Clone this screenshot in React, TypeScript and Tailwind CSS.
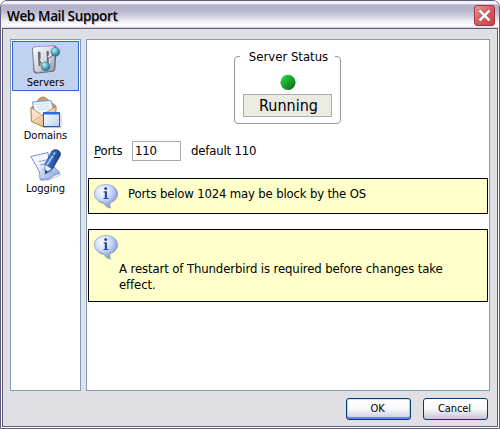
import React from "react";

function ServersIcon() {
  return (
    <svg width="32" height="32" viewBox="0 0 32 32">
      <defs>
        <linearGradient id="metal" x1="0" y1="0" x2="1" y2="1">
          <stop offset="0" stopColor="#ffffff" />
          <stop offset="0.55" stopColor="#d3d4da" />
          <stop offset="1" stopColor="#9294a6" />
        </linearGradient>
        <linearGradient id="slot" x1="0" y1="0" x2="1" y2="0">
          <stop offset="0" stopColor="#3a3d49" />
          <stop offset="1" stopColor="#9a9dac" />
        </linearGradient>
        <radialGradient id="knob" cx="0.35" cy="0.3" r="0.75">
          <stop offset="0" stopColor="#c5eef5" />
          <stop offset="0.5" stopColor="#57b3cd" />
          <stop offset="1" stopColor="#1c6589" />
        </radialGradient>
      </defs>
      <path d="M5 1.500 L24 .5 Q27.500 .5 27.300 4 L26 25 Q25.800 28 23 28.500 L7 30.500 Q3 31 2.500 27 L1.200 5 Q1.200 1.700 5 1.500Z" fill="#62636f" />
      <path d="M5 2 L22.500 1 Q25.800 1 25.500 4 L24.300 25 Q24 27 22 27.300 L7 29 Q4 29.300 3.700 26.500 L2 5 Q2 2.200 5 2Z" fill="url(#metal)" stroke="#b5b6c2" strokeWidth="0.7" />
      <path d="M7 7.500 Q9 5.500 11 7.500 V22 Q9.500 24.500 7.500 22Z" fill="url(#slot)" stroke="#ffffff" strokeWidth="0.8" />
      <path d="M16 6.500 Q18 5 20 6.500 L19.700 20 Q18 22 16.500 20Z" fill="url(#slot)" stroke="#ffffff" strokeWidth="0.8" />
      <path d="M10 16.500 L15 22" stroke="#6b6e7a" strokeWidth="2.600" />
      <path d="M10 15.500 L15 21 M18 13 L24.500 8.500" stroke="#edeef2" strokeWidth="1.800" />
      <path d="M18 14.500 L24.500 10" stroke="#555867" strokeWidth="1" />
      <circle cx="15.500" cy="22.800" r="4.700" fill="url(#knob)" stroke="#276f8f" strokeWidth="0.6" />
      <circle cx="26" cy="7.300" r="4.700" fill="url(#knob)" stroke="#276f8f" strokeWidth="0.6" />
    </svg>
  );
}

function DomainsIcon() {
  return (
    <svg width="32" height="32" viewBox="0 0 32 32">
      <defs>
        <linearGradient id="flap" x1="0" y1="0" x2="1" y2="1">
          <stop offset="0" stopColor="#fff3e2" />
          <stop offset="1" stopColor="#e3a76c" />
        </linearGradient>
        <linearGradient id="win" x1="0" y1="0" x2="1" y2="1">
          <stop offset="0" stopColor="#ffffff" />
          <stop offset="1" stopColor="#b4d2f8" />
        </linearGradient>
      </defs>
      <path d="M1 12 L10 2 Q12 .3 15 1.500 L26 10 L25 29 L14 31 L1.500 25.500Z" fill="#d09b69" stroke="#a56f40" strokeWidth="0.8" />
      <path d="M2.500 6 L21 4.500 L24.500 18 L13 22 L5 19Z" fill="#eef7ff" stroke="#4e9fdc" strokeWidth="0.9" />
      <path d="M6 8.500 L19 7.500 M7 11 L20 10 M8 13.500 L20 12.500" stroke="#cddbe7" />
      <path d="M1 11.500 L12 19 L26 10.500 L25 29 L14 31 L1.500 25.500Z" fill="url(#flap)" stroke="#bb7d48" strokeWidth="0.8" />
      <path d="M1.500 25.500 L12 19 L16 22" fill="none" stroke="#c68b58" />
      <path d="M2 24.500 L11.500 18.500" fill="none" stroke="#fff8ed" />
      <path d="M15 31.500 H31 V18" fill="none" stroke="#888899" strokeOpacity="0.5" />
      <rect x="13.500" y="16.500" width="16" height="14" fill="url(#win)" stroke="#2858b5" />
      <path d="M13 16 H30 V18.500 H13Z" fill="#2f6bdc" />
    </svg>
  );
}

function LoggingIcon() {
  return (
    <svg width="32" height="32" viewBox="0 0 32 32">
      <defs>
        <linearGradient id="paper" x1="0" y1="0" x2="1" y2="1">
          <stop offset="0" stopColor="#ffffff" />
          <stop offset="0.4" stopColor="#e9f0ff" />
          <stop offset="1" stopColor="#7b9bdc" />
        </linearGradient>
        <linearGradient id="pen" x1="0" y1="0" x2="1" y2="0.5">
          <stop offset="0" stopColor="#8bb9f3" />
          <stop offset="0.45" stopColor="#386dc1" />
          <stop offset="1" stopColor="#173672" />
        </linearGradient>
      </defs>
      <path d="M11 31.500 L19 31 L31 25.500" fill="none" stroke="#888899" strokeOpacity="0.5" />
      <path d="M.8 7.500 L18 3.500 Q18 10 22 15.500 L30 24 Q24 25.500 19 30 L10 30.500 Q11 23 6 16.500Z" fill="url(#paper)" stroke="#6787bf" strokeWidth="0.9" />
      <path d="M9 12.500 L16 11 M10 16 L15 15 M12 21 L19 19 M14 25.500 L22 22.500" stroke="#8aa3d5" strokeWidth="1" />
      <path d="M22 2 Q25 -.5 28.500 1.500 Q31.500 3.500 30 7 L22.500 20 L15.500 24.500 L15 15Z" fill="url(#pen)" stroke="#1b3d7e" strokeWidth="0.8" />
      <path d="M15.200 16 L21.500 19.800 L15.500 24Z" fill="#eaf1fc" />
      <path d="M15.200 21 V24.300 L18 22.500Z" fill="#152647" />
      <path d="M25 3.500 L17 16" stroke="#a5cbfa" strokeWidth="1.500" />
      <path d="M21.500 5 L28.500 9" stroke="#214680" strokeWidth="1" />
    </svg>
  );
}

function InfoIcon() {
  return (
    <svg className="shrink-0" width="25" height="25" viewBox="0 0 25 25">
      <defs>
        <radialGradient id="bubble" cx="0.38" cy="0.3" r="0.75">
          <stop offset="0" stopColor="#ffffff" />
          <stop offset="0.45" stopColor="#d0defc" />
          <stop offset="1" stopColor="#7393dd" />
        </radialGradient>
      </defs>
      <path d="M12 1 C19 1 24 4.500 24 10 C24 14.500 20 18 16.500 19 Q15.500 22 17.500 24.500 Q12 24 10 20 C5 19 1.500 15.500 1.500 11 C1.500 5 6 1 12 1Z" fill="#77778b" opacity="0.65" />
      <path d="M12 .5 C18.500 .5 23 4 23 9.500 C23 14 19.500 17.500 15 18.500 Q14 21 16 23.500 Q11.500 22.500 10 18.800 C5 18 .5 15 .5 9.700 C.5 4 6 .5 12 .5Z" fill="url(#bubble)" stroke="#8ea4d6" strokeWidth="0.8" />
      <circle cx="11.700" cy="4.400" r="1.500" fill="#2f4a9c" />
      <path d="M9.500 7.300 H13 V14 H14.500 V15 H9.500 V14 H10.800 V8.500 H9.500Z" fill="#2f4a9c" />
    </svg>
  );
}

function SideItem({ label, icon, selected }: { label: string; icon: React.ReactNode; selected?: boolean }) {
  return (
    <div className={selected
      ? "flex h-[50px] flex-col items-center border border-[#316ac5] bg-[#c1d2ee] pt-[3px]"
      : "flex h-[53px] flex-col items-center pt-[5px]"}>
      {icon}
      <span className="mt-px text-[11px] leading-[14px]">{label}</span>
    </div>
  );
}

export default function App() {
  return (
    <div className="flex h-[429px] w-[500px] flex-col overflow-hidden rounded-t-[7px] border border-[#615e7d] bg-white font-['DejaVu_Sans_Condensed','DejaVu_Sans',sans-serif] text-black">
      <header className="flex h-[27px] shrink-0 items-center justify-between bg-[linear-gradient(to_bottom,#e5e5ef_0px,#ffffff_2px,#b4b3c9_4px,#b5b4ca_9px,#d0d0df_15px,#f4f4f8_21px,#ffffff_25px,#c9c9d3_27px)] pl-1.5 pr-1">
        <h1 className="pt-0.5 font-['Open_Sans',sans-serif] text-[13.5px] font-semibold leading-4 tracking-[-0.35px] [text-shadow:1px_1px_0_#b5b5cc]">Web Mail Support</h1>
        <button className="mt-0.5 flex size-[21px] items-center justify-center rounded-[3px] border border-[#9d3447] bg-linear-to-br from-[#e89a9b] via-[#d75b5e] to-[#c94247]" aria-label="Close">
          <svg width="13" height="13" viewBox="0 0 13 13"><path d="M1.500 1.500 L11.500 11.500 M11.500 1.500 L1.500 11.500" stroke="#733" strokeWidth="4" strokeOpacity="0.45" /><path d="M1.500 1.500 L11.500 11.500 M11.500 1.500 L1.500 11.500" stroke="#fff" strokeWidth="2.500" /></svg>
        </button>
      </header>
      <main className="mx-px mb-px flex min-h-0 flex-1 flex-col border border-[#615e7d] bg-[#e0dfe3] pl-[7px] pr-[7px] pt-[10px]">
        <div className="flex h-[352px] shrink-0 gap-[5px]">
          <aside className="w-[71px] border border-[#7f9db9] bg-white p-px">
            <SideItem label="Servers" selected icon={<ServersIcon />} />
            <SideItem label="Domains" icon={<DomainsIcon />} />
            <SideItem label="Logging" icon={<LoggingIcon />} />
          </aside>
          <section className="min-w-0 flex-1 border border-[#7f9db9] bg-white px-px pt-2.5">
            <fieldset className="ml-[146px] flex h-[74px] w-[107px] min-w-0 flex-col items-center rounded-[4px] border border-[#919b9c]">
              <legend className="mx-auto pl-[9px] pr-[7px] text-[13px] leading-[13px]">Server Status</legend>
              <svg className="mt-[11px] shrink-0" width="16" height="16" viewBox="0 0 16 16">
                <defs><linearGradient id="led" x1="0.15" y1="0.1" x2="0.9" y2="0.9"><stop offset="0" stopColor="#25d63e" /><stop offset="1" stopColor="#126b1a" /></linearGradient></defs>
                <circle cx="8" cy="8.300" r="7.600" fill="url(#led)" />
              </svg>
              <div className="mt-1 flex h-[23px] w-[89px] shrink-0 items-center justify-center border border-[#a5acb2] bg-[#ebebe4] pl-0.5 pt-px text-[16px]">Running</div>
            </fieldset>
            <div className="mt-[17px] flex h-5 items-center pl-1.5 text-[13px] tracking-[-0.17px]">
              <label className="w-[38px]"><span className="underline underline-offset-2">P</span>orts</label>
              <input className="h-5 w-[49px] border border-[#a5acb2] bg-white pb-0.5 pl-0.5 text-[13px] tracking-[-0.17px]" defaultValue="110" />
              <span className="ml-2.5">default 110</span>
            </div>
            <div className="mt-[17px] flex h-9 border border-black bg-[#ffffcc] pl-[5px] pt-[5px]">
              <InfoIcon />
              <span className="ml-[9px] mt-0.5 text-[13px] leading-4 tracking-[-0.17px]">Ports below 1024 may be block by the OS</span>
            </div>
            <div className="mt-[15px] h-[73px] border border-black bg-[#ffffcc] pl-[5px] pt-[5px]">
              <InfoIcon />
              <p className="ml-[25px] mt-[1px] w-[350px] text-[13px] leading-4 tracking-[-0.11px]">A restart of Thunderbird is required before changes take effect.</p>
            </div>
          </section>
        </div>
        <footer className="mt-[7px] flex justify-end gap-3 pr-0.5 text-[11px] tracking-[-0.1px]">
          <button className="h-[22px] w-[65px] rounded-[3px] border border-[#003c74] bg-linear-to-b from-white via-[#f8f8fb] to-[#cac8dc] pr-0.5 shadow-[inset_0_1px_#cee7ff,inset_0_-2px_#6982ee,inset_1px_0_#b5ceff,inset_-1px_0_#b5ceff]">OK</button>
          <button className="h-[22px] w-[65px] rounded-[3px] border border-[#003c74] bg-linear-to-b from-white via-[#f8f8fb] to-[#c5c3d8] pr-0.5">Cancel</button>
        </footer>
      </main>
    </div>
  );
}
